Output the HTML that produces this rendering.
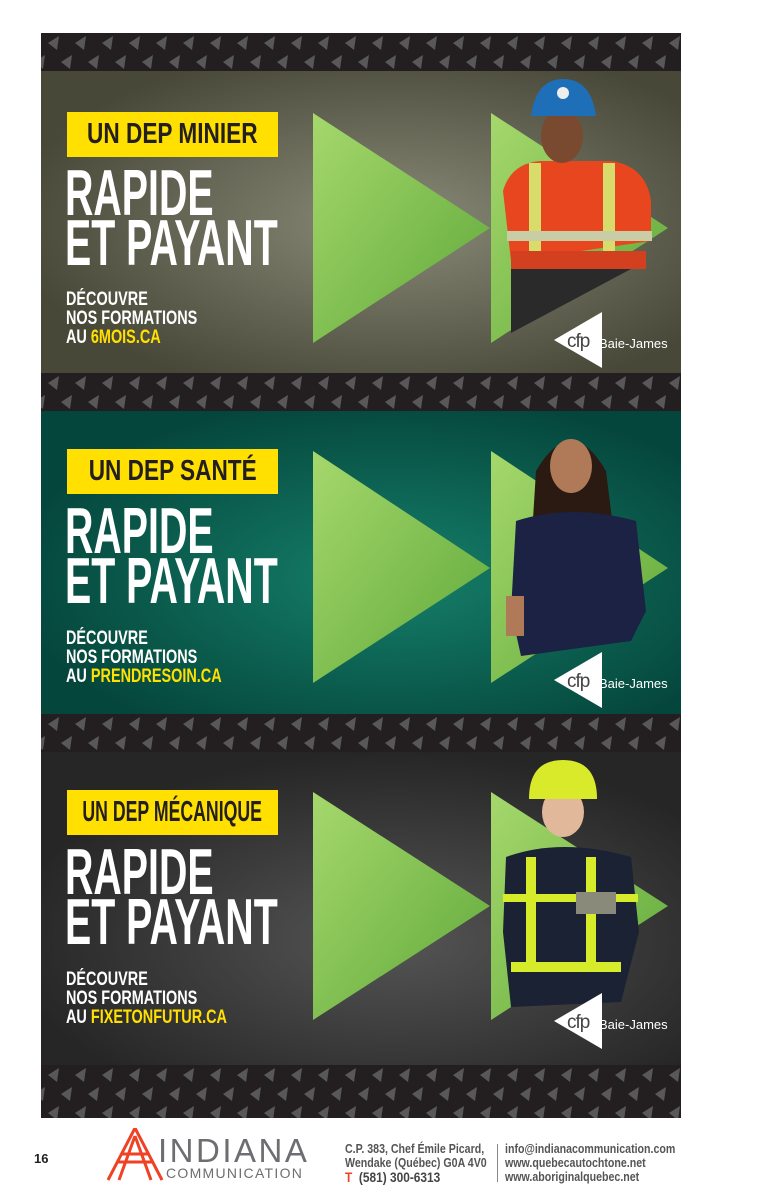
<!DOCTYPE html>
<html><head><meta charset="utf-8"><style>
*{margin:0;padding:0;box-sizing:border-box}
body{width:760px;height:1198px;background:#fff;position:relative;overflow:hidden;font-family:"Liberation Sans",sans-serif}
.wrap{position:absolute;left:41px;top:33px;width:640px;height:1085px;background:#222;overflow:hidden}
.strip{position:absolute;left:0;width:640px}
.panel{position:absolute;left:0;width:640px;overflow:hidden}
.tag{position:absolute;left:26px;width:211px;height:45px;background:#ffe000;display:flex;justify-content:center;align-items:center}
.tag span{display:inline-block;white-space:nowrap;color:#231f20;font-weight:bold;font-size:29px;transform:scaleX(0.78)}
.big{position:absolute;left:24px;color:#fff;font-weight:bold;font-size:65px;line-height:50px;white-space:nowrap;transform:scaleX(0.605);transform-origin:left top}
.small{position:absolute;left:25px;color:#fff;font-weight:bold;font-size:19px;line-height:19px;white-space:nowrap;transform:scaleX(0.76);transform-origin:left top}
.small b{color:#ffe000}
.pnl svg{position:absolute;left:0;top:0}
.foot{position:absolute;font-weight:bold;color:#555;font-size:12.5px;line-height:14px;white-space:nowrap;transform:scaleX(0.85);transform-origin:left top}
</style></head><body>
<div class="wrap">
<svg width="0" height="0" style="position:absolute"><defs>
<pattern id="pt" width="27" height="38" patternUnits="userSpaceOnUse">
<rect width="27" height="38" fill="#231f20"/>
<polygon points="7,10 18,3 16,17" fill="#58585a"/>
<polygon points="20,29 31,22 29,36" fill="#58585a"/>
<polygon points="-7,29 4,22 2,36" fill="#58585a"/>
</pattern>
<radialGradient id="g1" cx="0.55" cy="0.5" r="0.6"><stop offset="0" stop-color="#8a8a78"/><stop offset="1" stop-color="#474838"/></radialGradient>
<radialGradient id="g2" cx="0.55" cy="0.55" r="0.6"><stop offset="0" stop-color="#15806a"/><stop offset="1" stop-color="#05463c"/></radialGradient>
<radialGradient id="g3" cx="0.55" cy="0.6" r="0.6"><stop offset="0" stop-color="#555"/><stop offset="1" stop-color="#262626"/></radialGradient>
<linearGradient id="tg" x1="0" y1="0" x2="1" y2="1"><stop offset="0" stop-color="#a6d86c"/><stop offset="1" stop-color="#5fa83a"/></linearGradient>
</defs></svg>
<svg class="strip" style="top:0" width="640" height="38"><rect width="640" height="38" fill="url(#pt)"/></svg>
<svg class="strip" style="top:340px" width="640" height="38"><rect width="640" height="38" fill="url(#pt)"/></svg>
<svg class="strip" style="top:681px" width="640" height="38"><rect width="640" height="38" fill="url(#pt)"/></svg>
<svg class="strip" style="top:1032px" width="640" height="53"><rect width="640" height="53" fill="url(#pt)"/></svg>

<!-- panel 1 -->
<div class="panel pnl" style="top:38px;height:302px">
<svg width="640" height="302">
<rect width="640" height="302" fill="url(#g1)"/>
<polygon points="272,42 449,157 272,272" fill="url(#tg)"/>
<polygon points="450,42 627,157 450,272" fill="url(#tg)"/>
<path d="M462 120 Q470 92 500 90 L570 90 Q605 95 610 130 L610 170 L470 190 Z" fill="#e8461e"/>
<rect x="488" y="92" width="12" height="110" fill="#d8dc6a"/>
<rect x="562" y="92" width="12" height="110" fill="#d8dc6a"/>
<rect x="466" y="160" width="145" height="10" fill="#c9cda6"/>
<rect x="470" y="180" width="135" height="18" fill="#d24020"/>
<polygon points="470,198 590,198 470,262" fill="#2a2a2a"/>
<ellipse cx="521" cy="65" rx="21" ry="27" fill="#7a4a30"/>
<path d="M490 45 Q495 8 522 8 Q550 8 555 45 Z" fill="#1e6fb8"/>
<circle cx="522" cy="22" r="6" fill="#eee"/>
<polygon points="513,269 561,241 561,297" fill="#fff"/>
<text x="526" y="276" font-family="Liberation Sans" font-size="19" fill="#444" letter-spacing="-1">cfp</text>
<text x="558" y="277" font-family="Liberation Sans" font-size="13" fill="#fff">Baie-James</text>
</svg>
<div class="tag" style="top:41px"><span>UN DEP MINIER</span></div>
<div class="big" style="top:97px">RAPIDE<br>ET PAYANT</div>
<div class="small" style="top:219px">DÉCOUVRE<br>NOS FORMATIONS<br>AU <b>6MOIS.CA</b></div>
</div>

<!-- panel 2 -->
<div class="panel pnl" style="top:378px;height:303px">
<svg width="640" height="303">
<rect width="640" height="303" fill="url(#g2)"/>
<polygon points="272,40 449,157 272,272" fill="url(#tg)"/>
<polygon points="450,40 627,157 450,272" fill="url(#tg)"/>
<path d="M495 60 Q530 0 565 60 L575 140 L490 140 Z" fill="#2a1a12"/>
<ellipse cx="530" cy="55" rx="21" ry="27" fill="#b07a58"/>
<path d="M475 110 Q530 92 595 110 L605 200 L590 230 L480 245 L470 200 Z" fill="#1b2244"/>
<rect x="465" y="185" width="18" height="40" fill="#b07a58"/>
<polygon points="513,269 561,241 561,297" fill="#fff"/>
<text x="526" y="276" font-family="Liberation Sans" font-size="19" fill="#444" letter-spacing="-1">cfp</text>
<text x="558" y="277" font-family="Liberation Sans" font-size="13" fill="#fff">Baie-James</text>
</svg>
<div class="tag" style="top:38px"><span>UN DEP SANTÉ</span></div>
<div class="big" style="top:95px">RAPIDE<br>ET PAYANT</div>
<div class="small" style="top:218px">DÉCOUVRE<br>NOS FORMATIONS<br>AU <b>PRENDRESOIN.CA</b></div>
</div>

<!-- panel 3 -->
<div class="panel pnl" style="top:719px;height:313px">
<svg width="640" height="313">
<rect width="640" height="313" fill="url(#g3)"/>
<polygon points="272,40 449,154 272,268" fill="url(#tg)"/>
<polygon points="450,40 627,154 450,268" fill="url(#tg)"/>
<path d="M465 105 Q520 85 590 105 L598 180 L580 250 L470 255 L462 180 Z" fill="#1a2233"/>
<rect x="485" y="105" width="10" height="110" fill="#d6ec2a"/>
<rect x="545" y="105" width="10" height="110" fill="#d6ec2a"/>
<rect x="462" y="142" width="135" height="8" fill="#d6ec2a"/>
<rect x="470" y="210" width="110" height="10" fill="#d6ec2a"/>
<ellipse cx="522" cy="60" rx="21" ry="25" fill="#e2b89a"/>
<path d="M488 47 Q488 8 522 8 Q556 8 556 47 Z" fill="#d9ea2a"/>
<rect x="535" y="140" width="40" height="22" fill="#8a8a7a"/>
<polygon points="513,269 561,241 561,297" fill="#fff"/>
<text x="526" y="276" font-family="Liberation Sans" font-size="19" fill="#444" letter-spacing="-1">cfp</text>
<text x="558" y="277" font-family="Liberation Sans" font-size="13" fill="#fff">Baie-James</text>
</svg>
<div class="tag" style="top:38px"><span style="transform:scaleX(0.61)">UN DEP MÉCANIQUE</span></div>
<div class="big" style="top:95px">RAPIDE<br>ET PAYANT</div>
<div class="small" style="top:218px">DÉCOUVRE<br>NOS FORMATIONS<br>AU <b>FIXETONFUTUR.CA</b></div>
</div>
</div>

<div style="position:absolute;left:34px;top:1151px;color:#222;font-size:13px;font-weight:bold">16</div>
<svg style="position:absolute;left:105px;top:1128px" width="60" height="54">
<g stroke="#ef4123" stroke-width="3" fill="none">
<line x1="30" y1="0" x2="3" y2="52"/><line x1="30" y1="0" x2="57" y2="52"/>
<line x1="30" y1="8" x2="14" y2="52"/><line x1="30" y1="8" x2="46" y2="52"/>
<line x1="12" y1="34" x2="48" y2="34"/><line x1="16" y1="26" x2="44" y2="26"/>
</g></svg>
<div style="position:absolute;left:158px;top:1134px;font-size:33px;color:#6d6e71;letter-spacing:2.5px;line-height:33px">INDIANA</div>
<div style="position:absolute;left:166px;top:1166px;font-size:14px;color:#6d6e71;letter-spacing:1.3px;line-height:14px">COMMUNICATION</div>
<div class="foot" style="left:345px;top:1142px">C.P. 383, Chef Émile Picard,<br>Wendake (Québec) G0A 4V0<br><span style="font-size:14px;color:#444"><span style="color:#ef4123">T</span>&nbsp; (581) 300-6313</span></div>
<div style="position:absolute;left:497px;top:1144px;width:1px;height:38px;background:#888"></div>
<div class="foot" style="left:505px;top:1142px">info@indianacommunication.com<br>www.quebecautochtone.net<br>www.aboriginalquebec.net</div>
</body></html>
